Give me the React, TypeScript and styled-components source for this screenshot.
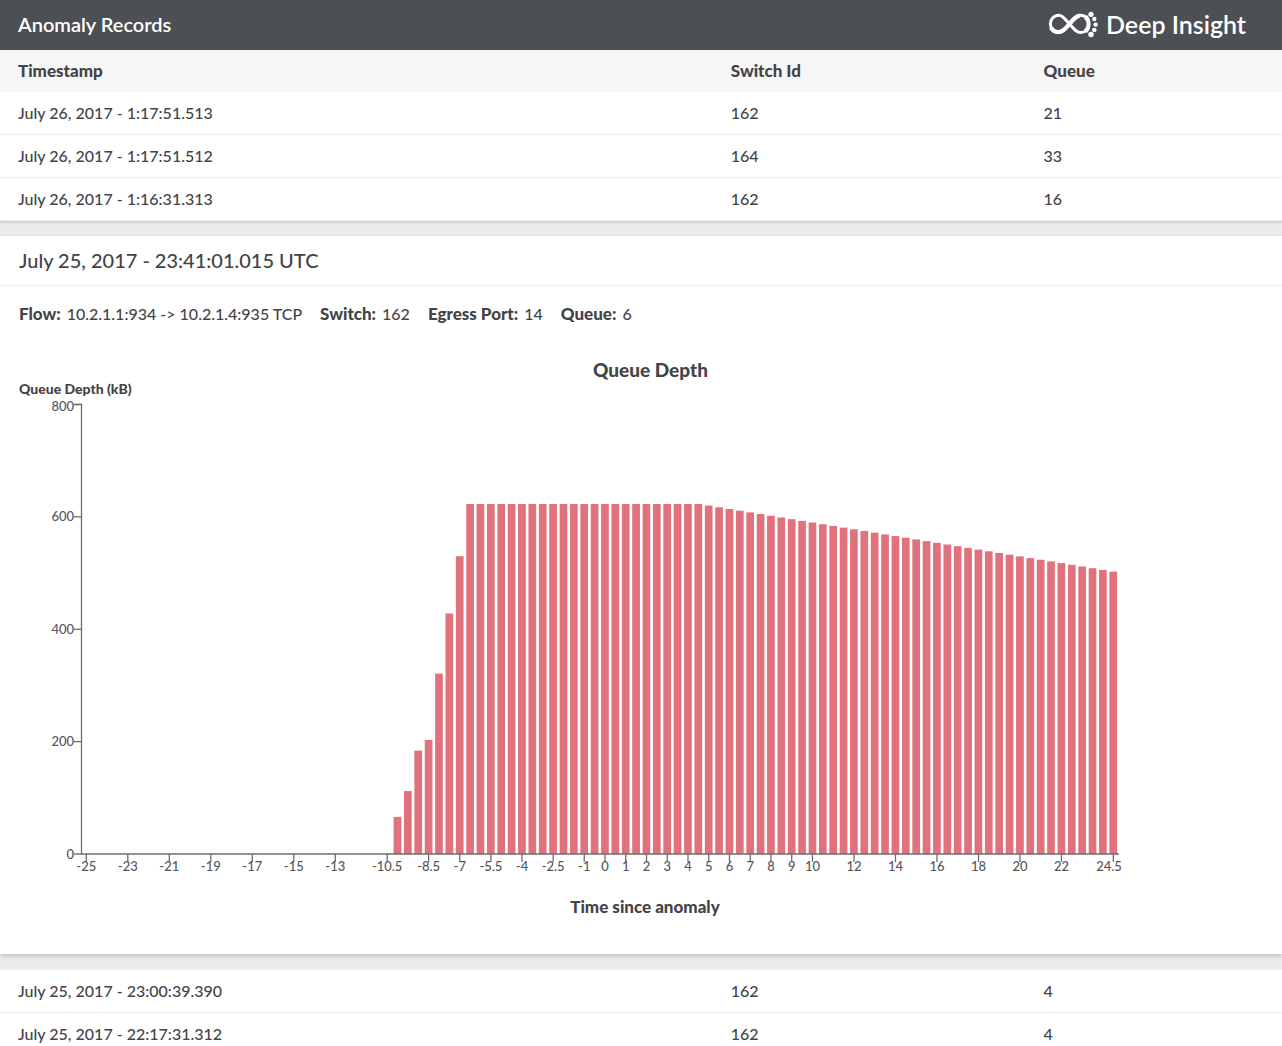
import React from 'react';
import styled, { createGlobalStyle } from 'styled-components';

const GlobalStyle = createGlobalStyle`
  * { box-sizing: border-box; }
  body {
    margin: 0;
    background: #ececec;
    color: #434446;
    font-family: Lato, "Open Sans", sans-serif;
    font-size: 16px;
    font-weight: 500;
  }
`;

const Page = styled.div`
  display: flex;
  flex-direction: column;
  height: 100vh;
`;

const TopBar = styled.header`
  display: flex;
  flex: none;
  align-items: center;
  justify-content: space-between;
  height: 50px;
  padding: 0 36px 2px 18px;
  background: #4c4f54;
  color: #fff;
`;

const PageTitle = styled.h1`
  margin: 0;
  font-size: 20px;
  font-weight: 600;
  line-height: 48px;
`;

const Brand = styled.div`
  display: flex;
  align-items: center;
  gap: 8px;
  font-size: 25px;
  font-weight: 600;
  line-height: 46px;
`;

const Content = styled.main`
  flex: 1;
  min-height: 0;
  overflow-y: auto;
  scrollbar-width: none;
`;

const Records = styled.table`
  width: 100%;
  table-layout: fixed;
  border-collapse: separate;
  border-spacing: 0;
  background: #fff;
  box-shadow: 0 2px 2px rgba(0, 0, 0, 0.12);
`;

const Column = styled.col<{ $share: string }>`
  width: ${(p) => p.$share};
`;

const HeadCell = styled.th`
  height: 42px;
  padding: 0 18px 2px;
  background: #f6f6f6;
  font-size: 17px;
  font-weight: 900;
  text-align: left;
`;

const Cell = styled.td`
  height: 43px;
  padding: 0 18px 2px;
  border-bottom: 1px solid #ebebeb;
`;

const Detail = styled.section`
  margin: 15px 0 16px;
  background: #fff;
  box-shadow: 0 2px 5px rgba(0, 0, 0, 0.2);
`;

const DetailTitle = styled.h2`
  margin: 0;
  padding: 0 19px;
  border-bottom: 1px solid #ebebeb;
  font-size: 20px;
  font-weight: 500;
  line-height: 49px;
`;

const Facts = styled.dl`
  display: flex;
  flex-wrap: wrap;
  gap: 0 18px;
  margin: 0;
  padding: 18px 19px 0;
  line-height: 20px;
`;

const Fact = styled.div`
  display: flex;
  align-items: baseline;
  gap: 6px;
  dt {
    font-size: 17px;
    font-weight: 900;
  }
  dd { margin: 0; }
`;

const ChartBlock = styled.figure`
  margin: 0;
  padding: 34px 0 24px 19px;
`;

const ChartTitle = styled.figcaption`
  font-size: 19px;
  font-weight: 900;
  line-height: 24px;
  text-align: center;
`;

const AxisTitle = styled.div`
  font-size: 14px;
  font-weight: 900;
  line-height: 14px;
`;

const Plot = styled.svg`
  display: block;
  width: 100%;
  height: auto;
`;

const AxisLine = styled.path`
  fill: none;
  stroke: #6c6d6f;
  stroke-width: 1.3;
`;

const TickLabel = styled.text`
  fill: #55565a;
  font-size: 13px;
`;

const TimeTitle = styled.text`
  fill: #434446;
  font-size: 17px;
  font-weight: 900;
`;

type RecordRow = { time: string; switchId: number; queue: number };

const newer: RecordRow[] = [
  { time: 'July 26, 2017 - 1:17:51.513', switchId: 162, queue: 21 },
  { time: 'July 26, 2017 - 1:17:51.512', switchId: 164, queue: 33 },
  { time: 'July 26, 2017 - 1:16:31.313', switchId: 162, queue: 16 },
];

const older: RecordRow[] = [
  { time: 'July 25, 2017 - 23:00:39.390', switchId: 162, queue: 4 },
  { time: 'July 25, 2017 - 22:17:31.312', switchId: 162, queue: 4 },
];

const facts = [
  ['Flow:', '10.2.1.1:934 -> 10.2.1.4:935 TCP'],
  ['Switch:', '162'],
  ['Egress Port:', '14'],
  ['Queue:', '6'],
];

// Queue depth in kB, one sample each half unit of time from -10 on.
const rise = [66, 112, 184, 203, 321, 428, 530];
const plateau = Array.from({ length: 23 }, () => 623);
const decline = Array.from({ length: 40 }, (_, i) => 620 - i * 3.01);
const samples = [...rise, ...plateau, ...decline].map((depth, i) => ({
  time: -10 + i / 2,
  depth,
}));

const timeTicks = [
  -25, -23, -21, -19, -17, -15, -13, -10.5, -8.5, -7, -5.5, -4, -2.5, -1,
  0, 1, 2, 3, 4, 5, 6, 7, 8, 9, 10, 12, 14, 16, 18, 20, 22, 24.5,
];
const depthTicks = [0, 200, 400, 600, 800];

const AXIS_X = 62.5;
const BASE_Y = 458;
const xOf = (time: number) => 67.3 + (time + 25) * 20.748;
const yOf = (depth: number) => BASE_Y - depth * 0.5619;

const depthLabelY = (depth: number) => Math.floor(yOf(depth)) + (depth === 800 ? 7 : 5);

function Logo() {
  return (
    <svg width="50" height="28" viewBox="0 0 50 28" aria-hidden="true">
      <path
        d="M21.5 14C16.5 8.5 14.5 5.2 11 5.2C6 5.2 2.4 9.3 2.4 14C2.4 19 6 22.6 11 22.6C14.8 22.6 17 19.5 21.5 14C26 8.5 28.5 5.2 32.5 5.2C37.5 5.2 40.8 9.3 40.8 14C40.8 19 37.5 22.6 32.5 22.6C28.5 22.6 26 19 21.5 14Z"
        fill="none"
        stroke="#fff"
        strokeWidth="3"
      />
      <path
        d="M3 17.5C5 21.5 8 22.2 11 22C15 21.8 17.5 18.4 21.5 14C25.5 9 28 6 32 5.6"
        fill="none"
        stroke="#fff"
        strokeWidth="4.2"
      />
      <path d="M37.5 6.5C41.5 11 41.5 17 37.5 21.5" fill="none" stroke="#fff" strokeWidth="4.2" />
      <g fill="#fff">
        <circle cx="43" cy="4.3" r="2.6" />
        <circle cx="46.3" cy="9" r="2.2" />
        <circle cx="47.6" cy="14.6" r="2.2" />
        <circle cx="46.3" cy="20" r="2.3" />
        <circle cx="43" cy="24.5" r="2.7" />
      </g>
    </svg>
  );
}

function RecordsTable({ rows, head }: { rows: RecordRow[]; head?: boolean }) {
  return (
    <Records>
      <colgroup>
        <Column $share="55.6%" />
        <Column $share="24.4%" />
        <Column $share="20%" />
      </colgroup>
      {head && (
        <thead>
          <tr>
            <HeadCell scope="col">Timestamp</HeadCell>
            <HeadCell scope="col">Switch Id</HeadCell>
            <HeadCell scope="col">Queue</HeadCell>
          </tr>
        </thead>
      )}
      <tbody>
        {rows.map((row) => (
          <tr key={row.time}>
            <Cell>{row.time}</Cell>
            <Cell>{row.switchId}</Cell>
            <Cell>{row.queue}</Cell>
          </tr>
        ))}
      </tbody>
    </Records>
  );
}

function QueueDepthChart() {
  return (
    <ChartBlock>
      <ChartTitle>Queue Depth</ChartTitle>
      <AxisTitle>Queue Depth (kB)</AxisTitle>
      <Plot viewBox="0 0 1263 534" role="img" aria-label="Queue Depth">
        {samples.map(({ time, depth }) => (
          <rect
            key={time}
            x={xOf(time) - 3.9}
            y={yOf(depth)}
            width={7.7}
            height={BASE_Y - yOf(depth)}
            fill="#e0727d"
          />
        ))}
        <AxisLine d={`M55 ${yOf(800)}H${AXIS_X}V${BASE_Y}H1100`} />
        {depthTicks.map((depth) => (
          <g key={depth}>
            <AxisLine d={`M55 ${yOf(depth)}H${AXIS_X}`} />
            <TickLabel x={55} y={depthLabelY(depth)} textAnchor="end">
              {depth}
            </TickLabel>
          </g>
        ))}
        {timeTicks.map((time) => (
          <g key={time}>
            <AxisLine d={`M${xOf(time)} ${BASE_Y}v8`} />
            <TickLabel x={Math.min(xOf(time), 1090)} y={475} textAnchor="middle">
              {time}
            </TickLabel>
          </g>
        ))}
        <TimeTitle x={626} y={517} textAnchor="middle">
          Time since anomaly
        </TimeTitle>
      </Plot>
    </ChartBlock>
  );
}

export default function App() {
  return (
    <Page>
      <GlobalStyle />
      <TopBar>
        <PageTitle>Anomaly Records</PageTitle>
        <Brand>
          <Logo />
          <span>Deep Insight</span>
        </Brand>
      </TopBar>
      <Content>
        <RecordsTable rows={newer} head />
        <Detail>
          <DetailTitle>July 25, 2017 - 23:41:01.015 UTC</DetailTitle>
          <Facts>
            {facts.map(([name, value]) => (
              <Fact key={name}>
                <dt>{name}</dt>
                <dd>{value}</dd>
              </Fact>
            ))}
          </Facts>
          <QueueDepthChart />
        </Detail>
        <RecordsTable rows={older} />
      </Content>
    </Page>
  );
}
